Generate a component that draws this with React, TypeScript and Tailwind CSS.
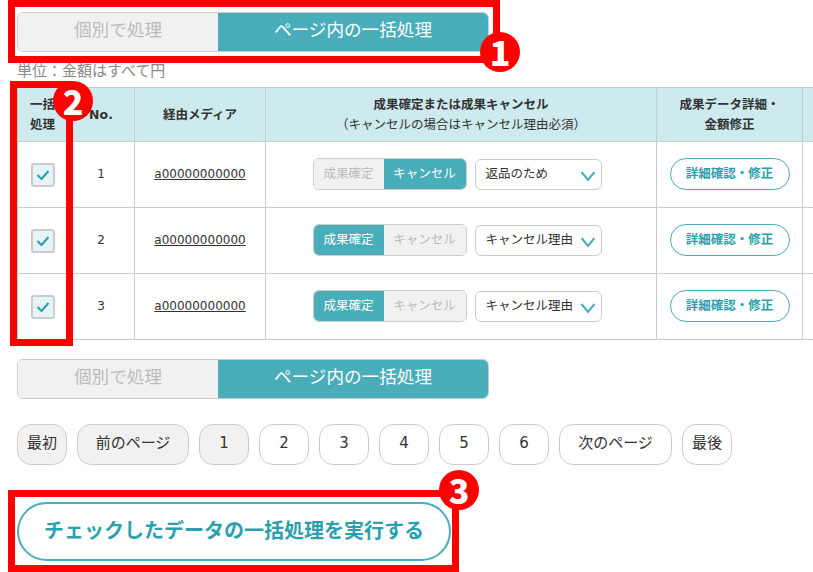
import React from 'react'

const font = { fontFamily: '"DejaVu Sans", "Noto Sans CJK JP", sans-serif' }

const ModeToggle = () => (
  <div className="flex h-10 w-[472px] overflow-hidden rounded-md border border-[#ccc] text-[17.6px]">
    <div className="flex w-[200px] items-center justify-center bg-[#f1f1f1] pb-1 text-[#bbb]">個別で処理</div>
    <div className="flex flex-1 items-center justify-center bg-[#4aadba] pb-1 text-white">ページ内の一括処理</div>
  </div>
)

const Check = () => (
  <div className="mx-auto flex h-6 w-6 items-center justify-center rounded-[3px] border-2 border-[#ccc] bg-[#e6f4f6]">
    <svg width="14" height="12" viewBox="0 0 14 12" fill="none">
      <path d="M1.5 6 L5.5 10 L12.5 2" stroke="#2b9fad" strokeWidth="2" />
    </svg>
  </div>
)

const Chevron = () => (
  <svg className="mt-0.5" width="16" height="12" viewBox="0 0 16 12" fill="none">
    <path d="M1.5 2 L8 10 L14.5 2" stroke="#4aadba" strokeWidth="2" />
  </svg>
)

const rows = [
  { no: 1, confirmed: false, reason: '返品のため' },
  { no: 2, confirmed: true, reason: 'キャンセル理由' },
  { no: 3, confirmed: true, reason: 'キャンセル理由' },
]

const Row = ({ no, confirmed, reason }: { no: number; confirmed: boolean; reason: string }) => (
  <tr className="h-[66px] text-[12.5px] text-[#333]">
    <td className="border border-[#ccc]"><Check /></td>
    <td className="border border-[#ccc] pb-px text-center text-[12px]">{no}</td>
    <td className="border border-[#ccc] pb-0.5 text-center text-[12px] underline">a00000000000</td>
    <td className="border border-[#ccc] pb-px pr-2">
      <div className="flex items-start justify-center gap-2">
        <div className="flex h-8 w-[154px] overflow-hidden rounded-md border border-[#ccc]">
          <div className={confirmed ? 'flex w-[70px] items-center justify-center bg-[#4aadba] text-white' : 'flex w-[70px] items-center justify-center bg-[#f1f1f1] text-[#bbb]'}>成果確定</div>
          <div className={confirmed ? 'flex flex-1 items-center justify-center bg-[#f1f1f1] text-[#bbb]' : 'flex flex-1 items-center justify-center bg-[#4aadba] text-white'}>キャンセル</div>
        </div>
        <div className="mt-px flex h-[31px] w-[127px] items-center justify-between rounded-md border border-[#ccc] bg-white pl-2.5 pr-[5px]">
          <span>{reason}</span>
          <Chevron />
        </div>
      </div>
    </td>
    <td className="border border-[#ccc] pb-px">
      <div className="mx-auto flex h-8 w-[120px] items-center justify-center rounded-full border border-[#4aadba] font-bold text-[#2b9fad]">詳細確認・修正</div>
    </td>
    <td className="border border-[#ccc]"></td>
  </tr>
)

const pages = [
  { label: '最初', w: 'w-[50px]', on: true },
  { label: '前のページ', w: 'w-[112px]', on: true },
  { label: '1', w: 'w-[50px]', on: true },
  { label: '2', w: 'w-[50px]', on: false },
  { label: '3', w: 'w-[50px]', on: false },
  { label: '4', w: 'w-[50px]', on: false },
  { label: '5', w: 'w-[50px]', on: false },
  { label: '6', w: 'w-[50px]', on: false },
  { label: '次のページ', w: 'w-[113px]', on: false },
  { label: '最後', w: 'w-[50px]', on: false },
]

const Badge = ({ n, className }: { n: number; className: string }) => (
  <div className={`absolute flex h-10 w-10 items-center justify-center rounded-full bg-[#f00] text-[34px] font-black leading-none text-white ${className}`} style={{ fontFamily: '"Noto Sans CJK JP", sans-serif' }}>
    {n}
  </div>
)

export default function App() {
  return (
    <div className="relative h-[572px] w-[813px] overflow-hidden bg-white pl-[17px] pt-3 text-[#333]" style={font}>
      <ModeToggle />
      <p className="mt-[9px] mb-[6px] h-5 text-[15px] leading-5 text-[#888]">単位：金額はすべて円</p>
      <table className="w-[900px] table-fixed border-collapse">
        <colgroup>
          <col className="w-[50px]" />
          <col className="w-[67px]" />
          <col className="w-[131px]" />
          <col className="w-[391px]" />
          <col className="w-[146px]" />
          <col />
        </colgroup>
        <thead>
          <tr className="h-[54px] bg-[#cdeaee] text-center text-[12.5px] font-bold leading-[20px] text-[#333]">
            <th className="border border-[#ccc]">一括<br />処理</th>
            <th className="border border-[#ccc]">No.</th>
            <th className="border border-[#ccc]">経由メディア</th>
            <th className="border border-[#ccc]">
              成果確定または成果キャンセル<br />
              <span className="font-normal">（キャンセルの場合はキャンセル理由必須）</span>
            </th>
            <th className="border border-[#ccc]">成果データ詳細・<br />金額修正</th>
            <th className="border border-[#ccc]"></th>
          </tr>
        </thead>
        <tbody>
          {rows.map((r) => <Row key={r.no} {...r} />)}
        </tbody>
      </table>
      <div className="mt-[19px]"><ModeToggle /></div>
      <div className="mt-[25px] flex gap-2.5">
        {pages.map((p) => (
          <div key={p.label} className={`flex h-[41px] items-center justify-center rounded-[14px] border border-[#ccc] text-[15px] ${p.w} ${p.on ? 'bg-[#f1f1f1]' : 'bg-white'}`}>
            <span className="pb-0.5">{p.label}</span>
          </div>
        ))}
      </div>
      <div className="mt-[37px] flex h-[59px] w-[434px] items-center justify-center rounded-full border-2 border-[#4aadba] pb-px text-[20px] font-bold text-[#2b9fad]">
        チェックしたデータの一括処理を実行する
      </div>

      {/* annotations drawn over the screen */}
      <div className="absolute left-2 top-0 h-[63px] w-[492px] border-[7px] border-[#f00]" />
      <div className="absolute left-[10px] top-[81px] h-[265px] w-[63px] border-[7px] border-[#f00]" />
      <div className="absolute left-2 top-[490px] h-[82px] w-[451px] border-[7px] border-[#f00]" />
      <Badge n={1} className="left-[480px] top-8" />
      <Badge n={2} className="left-[53px] top-[81px]" />
      <Badge n={3} className="left-[439px] top-[470px]" />
    </div>
  )
}
